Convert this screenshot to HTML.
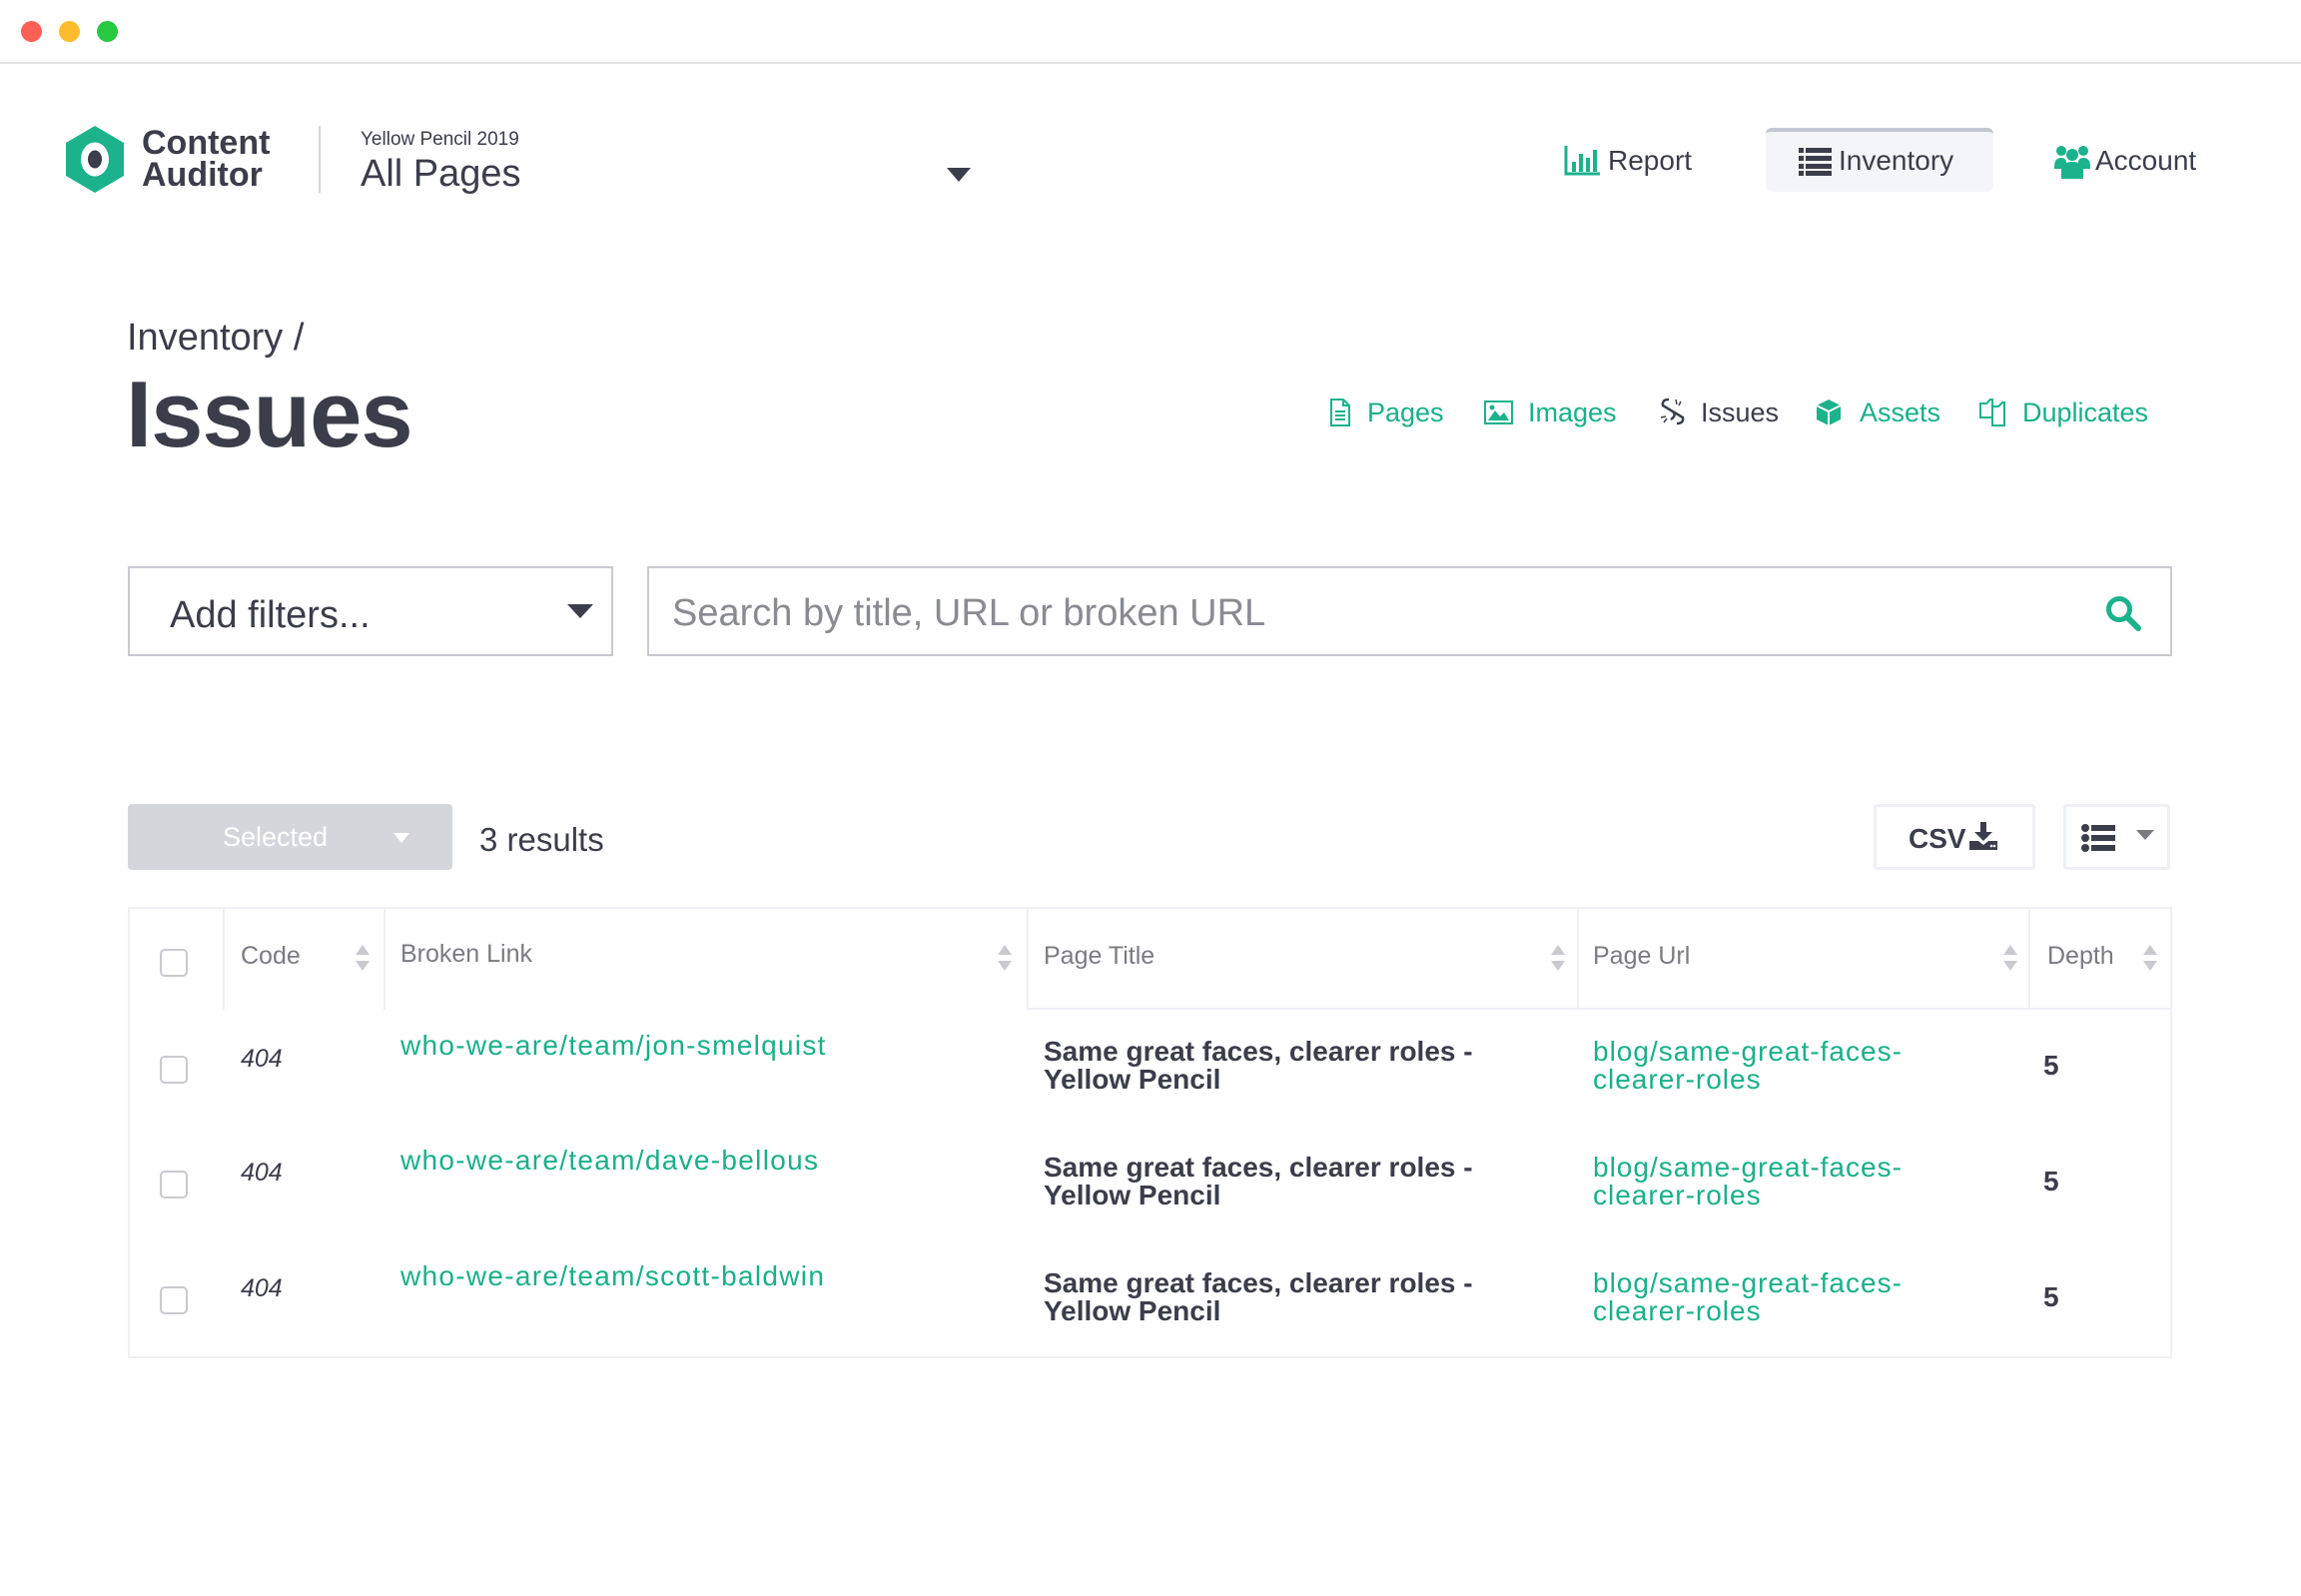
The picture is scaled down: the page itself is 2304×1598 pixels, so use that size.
<!DOCTYPE html>
<html><head><meta charset="utf-8"><style>
*{margin:0;padding:0;box-sizing:border-box}
body{width:2304px;height:1598px;background:#fff;font-family:"Liberation Sans",sans-serif;color:#3b3d4a;position:relative;overflow:hidden}
.a{position:absolute;white-space:nowrap}
.g{color:#19b08a}
.dot{position:absolute;top:21px;width:21px;height:21px;border-radius:50%}
.hd{position:absolute;top:943px;font-size:25px;color:#7a7b82}
.sort{position:absolute;top:946px;width:14px;height:26px}
.cb{position:absolute;left:160px;width:28px;height:28px;border:2px solid #c9cacf;border-radius:5px;background:#fff}
.code{position:absolute;left:241px;font-size:25px;font-style:italic;color:#3b3d4a}
.bl{position:absolute;left:401px;font-size:28px;color:#19b08a;letter-spacing:1.3px}
.pt{position:absolute;left:1045px;font-size:28px;line-height:28px;font-weight:bold;color:#3b3d4a}
.pu{position:absolute;left:1595px;font-size:28px;line-height:28px;color:#19b08a;letter-spacing:1px}
.dp{position:absolute;left:2046px;font-size:28px;font-weight:bold}
.vl{position:absolute;top:910px;height:101px;width:2px;background:#eef0f4}
</style></head><body>
<div class="dot" style="left:21px;background:#fe5f57"></div>
<div class="dot" style="left:59px;background:#febc2e"></div>
<div class="dot" style="left:97px;background:#28c840"></div>
<div class="a" style="left:0;top:62px;width:2304px;height:2px;background:#e2e2e2"></div>

<svg class="a" style="left:66px;top:126px" width="58" height="67" viewBox="0 0 58 67"><polygon points="29,0 58,17 58,50 29,67 0,50 0,17" fill="#1bb28c"/><ellipse cx="29" cy="33.5" rx="14" ry="17" fill="#fff"/><ellipse cx="29" cy="33.5" rx="7" ry="9" fill="#3b3d4a"/></svg>
<div class="a" style="left:142px;top:127px;font-size:34px;font-weight:bold;line-height:32px">Content<br>Auditor</div>
<div class="a" style="left:319px;top:126px;width:2px;height:67px;background:#d5d6da"></div>
<div class="a" style="left:361px;top:129px;font-size:19px">Yellow Pencil 2019</div>
<div class="a" style="left:361px;top:153px;font-size:38px">All Pages</div>
<svg class="a" style="left:948px;top:168px" width="24" height="14"><polygon points="0,0 24,0 12,14" fill="#3b3d4a"/></svg>

<svg class="a" style="left:1566px;top:146px" width="36" height="30" viewBox="0 0 36 30"><path d="M2 0V28H36" stroke="#1bb28c" stroke-width="3" fill="none"/><rect x="8" y="16" width="4" height="10" fill="#1bb28c"/><rect x="15" y="8" width="4" height="18" fill="#1bb28c"/><rect x="22" y="12" width="4" height="14" fill="#1bb28c"/><rect x="29" y="4" width="4" height="22" fill="#1bb28c"/></svg>
<div class="a" style="left:1610px;top:145px;font-size:28px">Report</div>
<div class="a" style="left:1768px;top:128px;width:228px;height:64px;background:#f4f5f9;border-radius:6px;border-top:4px solid #c4c6d0"></div>
<svg class="a" style="left:1801px;top:148px" width="33" height="28" viewBox="0 0 33 28"><g fill="#3b3d4a"><rect x="0" y="0" width="5" height="5"/><rect x="7" y="0" width="26" height="5"/><rect x="0" y="8" width="5" height="5"/><rect x="7" y="8" width="26" height="5"/><rect x="0" y="16" width="5" height="5"/><rect x="7" y="16" width="26" height="5"/><rect x="0" y="23" width="5" height="5"/><rect x="7" y="23" width="26" height="5"/></g></svg>
<div class="a" style="left:1841px;top:145px;font-size:28px">Inventory</div>
<svg class="a" style="left:2057px;top:145px" width="36" height="34" viewBox="0 0 36 34"><g fill="#1bb28c"><circle cx="7" cy="6" r="5"/><circle cx="29" cy="6" r="5"/><circle cx="18" cy="10" r="6"/><path d="M0 22Q0 13 7 13Q12 13 12 18V24H0Z"/><path d="M36 22Q36 13 29 13Q24 13 24 18V24H36Z"/><path d="M7 34V26Q7 17 18 17Q29 17 29 26V34Z"/></g></svg>
<div class="a" style="left:2098px;top:145px;font-size:28px">Account</div>

<div class="a" style="left:127px;top:317px;font-size:38px;color:#3b3d4a">Inventory /</div>
<div class="a" style="left:126px;top:361px;font-size:94px;font-weight:bold;letter-spacing:-1px">Issues</div>

<svg class="a" style="left:1331px;top:399px" width="22" height="28" viewBox="0 0 22 28"><path d="M2 1H14L20 7V27H2Z M14 1V7H20 M6 13H16 M6 17H16 M6 21H16" stroke="#1bb28c" stroke-width="2" fill="none"/></svg>
<div class="a g" style="left:1369px;top:398px;font-size:27px">Pages</div>
<svg class="a" style="left:1486px;top:401px" width="29" height="24" viewBox="0 0 29 24"><rect x="1" y="1" width="27" height="22" stroke="#1bb28c" stroke-width="2" fill="none"/><path d="M4 20L11 10L16 16L20 12L25 20Z" fill="#1bb28c"/><circle cx="8" cy="7" r="2.5" fill="#1bb28c"/></svg>
<div class="a g" style="left:1530px;top:398px;font-size:27px">Images</div>
<svg class="a" style="left:1661px;top:398px" width="28" height="28" viewBox="0 0 28 28"><path d="M10 2Q3 2 4 8L14 14Q18 18 12 22 M18 26Q25 26 24 20L14 14" stroke="#3b3d4a" stroke-width="2.5" fill="none"/><path d="M17 2L18 7M22 4L20 8M2 20L7 19M5 25L8 21" stroke="#3b3d4a" stroke-width="1.5"/></svg>
<div class="a" style="left:1703px;top:398px;font-size:27px">Issues</div>
<svg class="a" style="left:1818px;top:399px" width="26" height="28" viewBox="0 0 26 28"><path d="M13 1L25 7V21L13 27L1 21V7Z" fill="#1bb28c"/><path d="M1 7L13 13L25 7M13 13V27" stroke="#fff" stroke-width="2" fill="none"/></svg>
<div class="a g" style="left:1862px;top:398px;font-size:27px">Assets</div>
<svg class="a" style="left:1981px;top:398px" width="28" height="30" viewBox="0 0 28 30"><path d="M2 6H8L12 2H14V20H2Z M14 9H20L24 5H26V28H14Z" stroke="#1bb28c" stroke-width="2" fill="#fff"/></svg>
<div class="a g" style="left:2025px;top:398px;font-size:27px">Duplicates</div>

<div class="a" style="left:128px;top:567px;width:486px;height:90px;border:2px solid #c9cad0"></div>
<div class="a" style="left:170px;top:595px;font-size:38px">Add filters...</div>
<svg class="a" style="left:568px;top:605px" width="26" height="14"><polygon points="0,0 26,0 13,14" fill="#3b3d4a"/></svg>
<div class="a" style="left:648px;top:567px;width:1527px;height:90px;border:2px solid #c9cad0"></div>
<div class="a" style="left:673px;top:593px;font-size:38px;color:#8a8b92">Search by title, URL or broken URL</div>
<svg class="a" style="left:2108px;top:596px" width="36" height="36" viewBox="0 0 36 36"><circle cx="14" cy="14" r="10.5" stroke="#1bb28c" stroke-width="5" fill="none"/><path d="M22 22L33 33" stroke="#1bb28c" stroke-width="6" stroke-linecap="round"/></svg>

<div class="a" style="left:128px;top:805px;width:325px;height:66px;background:#d5d6dc;border-radius:4px"></div>
<div class="a" style="left:223px;top:823px;font-size:27px;color:#fff">Selected</div>
<svg class="a" style="left:394px;top:834px" width="16" height="10"><polygon points="0,0 16,0 8,10" fill="#fff"/></svg>
<div class="a" style="left:480px;top:822px;font-size:33px">3 results</div>

<div class="a" style="left:1876px;top:805px;width:162px;height:66px;border:3px solid #eef0f4;border-radius:3px"></div>
<div class="a" style="left:1911px;top:824px;font-size:28px;font-weight:bold">CSV</div>
<svg class="a" style="left:1972px;top:823px" width="28" height="28" viewBox="0 0 28 28"><path d="M11 0H17V10H23L14 19L5 10H11Z" fill="#3b3d4a"/><path d="M0 19H9L14 23L19 19H28V28H0Z" fill="#3b3d4a"/><circle cx="22" cy="24" r="1.3" fill="#fff"/><circle cx="25" cy="24" r="1.3" fill="#fff"/></svg>
<div class="a" style="left:2066px;top:805px;width:107px;height:66px;border:3px solid #eef0f4;border-radius:3px"></div>
<svg class="a" style="left:2084px;top:825px" width="34" height="28" viewBox="0 0 34 28"><g fill="#3b3d4a"><circle cx="4" cy="4" r="4"/><circle cx="4" cy="14" r="4"/><circle cx="4" cy="24" r="4"/><rect x="10" y="1" width="24" height="6"/><rect x="10" y="11" width="24" height="6"/><rect x="10" y="21" width="24" height="6"/></g></svg>
<svg class="a" style="left:2139px;top:831px" width="18" height="10"><polygon points="0,0 18,0 9,10" fill="#7a7b82"/></svg>

<div class="a" style="left:128px;top:908px;width:2047px;height:452px;border:2px solid #eef0f4"></div>
<div class="a" style="left:1029px;top:1009px;width:1145px;height:2px;background:#eef0f4"></div>
<div class="vl" style="left:223px"></div><div class="vl" style="left:384px"></div><div class="vl" style="left:1028px"></div><div class="vl" style="left:1579px"></div><div class="vl" style="left:2031px"></div>
<div class="cb" style="top:950px"></div>
<div class="hd" style="left:241px">Code</div>
<div class="hd" style="left:401px;top:941px">Broken Link</div>
<div class="hd" style="left:1045px">Page Title</div>
<div class="hd" style="left:1595px">Page Url</div>
<div class="hd" style="left:2050px">Depth</div>
<svg class="sort" style="left:356px" viewBox="0 0 14 26"><polygon points="7,0 14,10 0,10" fill="#c9cacf"/><polygon points="0,16 14,16 7,26" fill="#c9cacf"/></svg>
<svg class="sort" style="left:999px" viewBox="0 0 14 26"><polygon points="7,0 14,10 0,10" fill="#c9cacf"/><polygon points="0,16 14,16 7,26" fill="#c9cacf"/></svg>
<svg class="sort" style="left:1553px" viewBox="0 0 14 26"><polygon points="7,0 14,10 0,10" fill="#c9cacf"/><polygon points="0,16 14,16 7,26" fill="#c9cacf"/></svg>
<svg class="sort" style="left:2006px" viewBox="0 0 14 26"><polygon points="7,0 14,10 0,10" fill="#c9cacf"/><polygon points="0,16 14,16 7,26" fill="#c9cacf"/></svg>
<svg class="sort" style="left:2146px" viewBox="0 0 14 26"><polygon points="7,0 14,10 0,10" fill="#c9cacf"/><polygon points="0,16 14,16 7,26" fill="#c9cacf"/></svg>

<div class="cb" style="top:1057px"></div><div class="code" style="top:1046px">404</div>
<div class="bl" style="top:1031px">who-we-are/team/jon-smelquist</div>
<div class="pt" style="top:1039px">Same great faces, clearer roles -<br>Yellow Pencil</div>
<div class="pu" style="top:1039px">blog/same-great-faces-<br>clearer-roles</div>
<div class="dp" style="top:1051px">5</div>

<div class="cb" style="top:1172px"></div><div class="code" style="top:1160px">404</div>
<div class="bl" style="top:1146px">who-we-are/team/dave-bellous</div>
<div class="pt" style="top:1155px">Same great faces, clearer roles -<br>Yellow Pencil</div>
<div class="pu" style="top:1155px">blog/same-great-faces-<br>clearer-roles</div>
<div class="dp" style="top:1167px">5</div>

<div class="cb" style="top:1288px"></div><div class="code" style="top:1276px">404</div>
<div class="bl" style="top:1262px">who-we-are/team/scott-baldwin</div>
<div class="pt" style="top:1271px">Same great faces, clearer roles -<br>Yellow Pencil</div>
<div class="pu" style="top:1271px">blog/same-great-faces-<br>clearer-roles</div>
<div class="dp" style="top:1283px">5</div>
</body></html>
